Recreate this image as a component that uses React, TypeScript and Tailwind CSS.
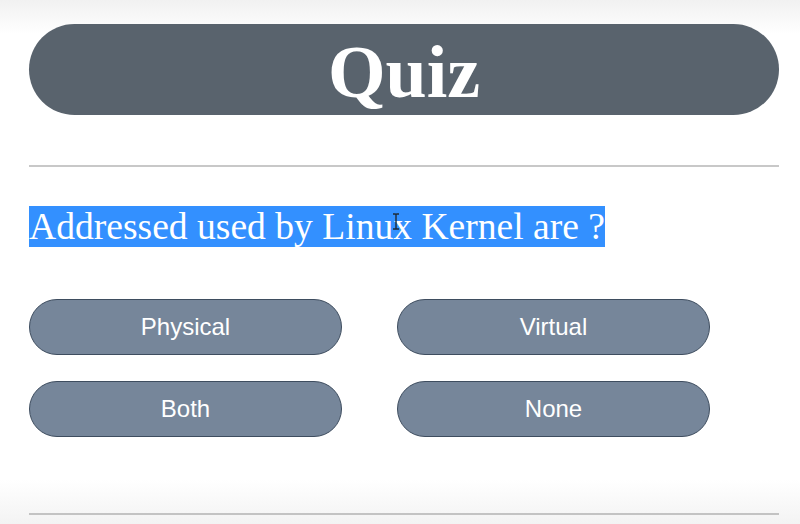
import { Fragment } from 'react'

const options = ['Physical', 'Virtual', 'Both', 'None']

function OptionButton({ label }: { label: string }) {
  return (
    <button className="h-[56px] w-[313px] rounded-full border border-[#3e4d5f] bg-[#76869a] text-[24px] leading-none text-white font-['Liberation_Sans',Arial,sans-serif]">
      {label}
    </button>
  )
}

export default function App() {
  return (
    <div className="h-[524px] w-full overflow-hidden bg-[linear-gradient(to_bottom,#f1f1f1_0px,#ffffff_34px,#ffffff_480px,#f3f3f3_524px)]">
      <div className="pl-[29px] pr-[21px] pt-[24px]">
        <header className="flex h-[91px] items-center justify-center rounded-full bg-[#59636d]">
          <h1 className="mt-[4px] text-[74px] font-bold leading-none text-white font-['Liberation_Serif','Times_New_Roman',serif]">
            Quiz
          </h1>
        </header>

        <hr className="mt-[50px] border-0 border-t-2 border-[#c8c8c8]" />

        <div className="mt-[39px] relative">
          <p className="text-[37.6px] leading-[42px] text-white font-['Liberation_Serif','Times_New_Roman',serif]">
            <span className="bg-[#3390ff]">Addressed used by Linux Kernel are ?</span>
          </p>
          {/* text cursor over the question */}
          <svg
            className="absolute left-[363px] top-[7px]"
            width="8"
            height="17"
            viewBox="0 0 8 17"
            fill="none"
            stroke="#1f2a36"
            strokeWidth="1.4"
          >
            <path d="M1 1h2.2c.5 0 .8.4.8 1M7 1H4.8c-.5 0-.8.4-.8 1v13c0 .6-.3 1-.8 1H1M7 16H4.8c-.5 0-.8-.4-.8-1" />
          </svg>
        </div>

        <div className="mt-[51px] grid w-[681px] grid-cols-[313px_313px] justify-between gap-y-[26px]">
          {options.map((o) => (
            <Fragment key={o}>
              <OptionButton label={o} />
            </Fragment>
          ))}
        </div>

        <hr className="mt-[76px] border-0 border-t-2 border-[#c3c3c3]" />
      </div>
    </div>
  )
}
